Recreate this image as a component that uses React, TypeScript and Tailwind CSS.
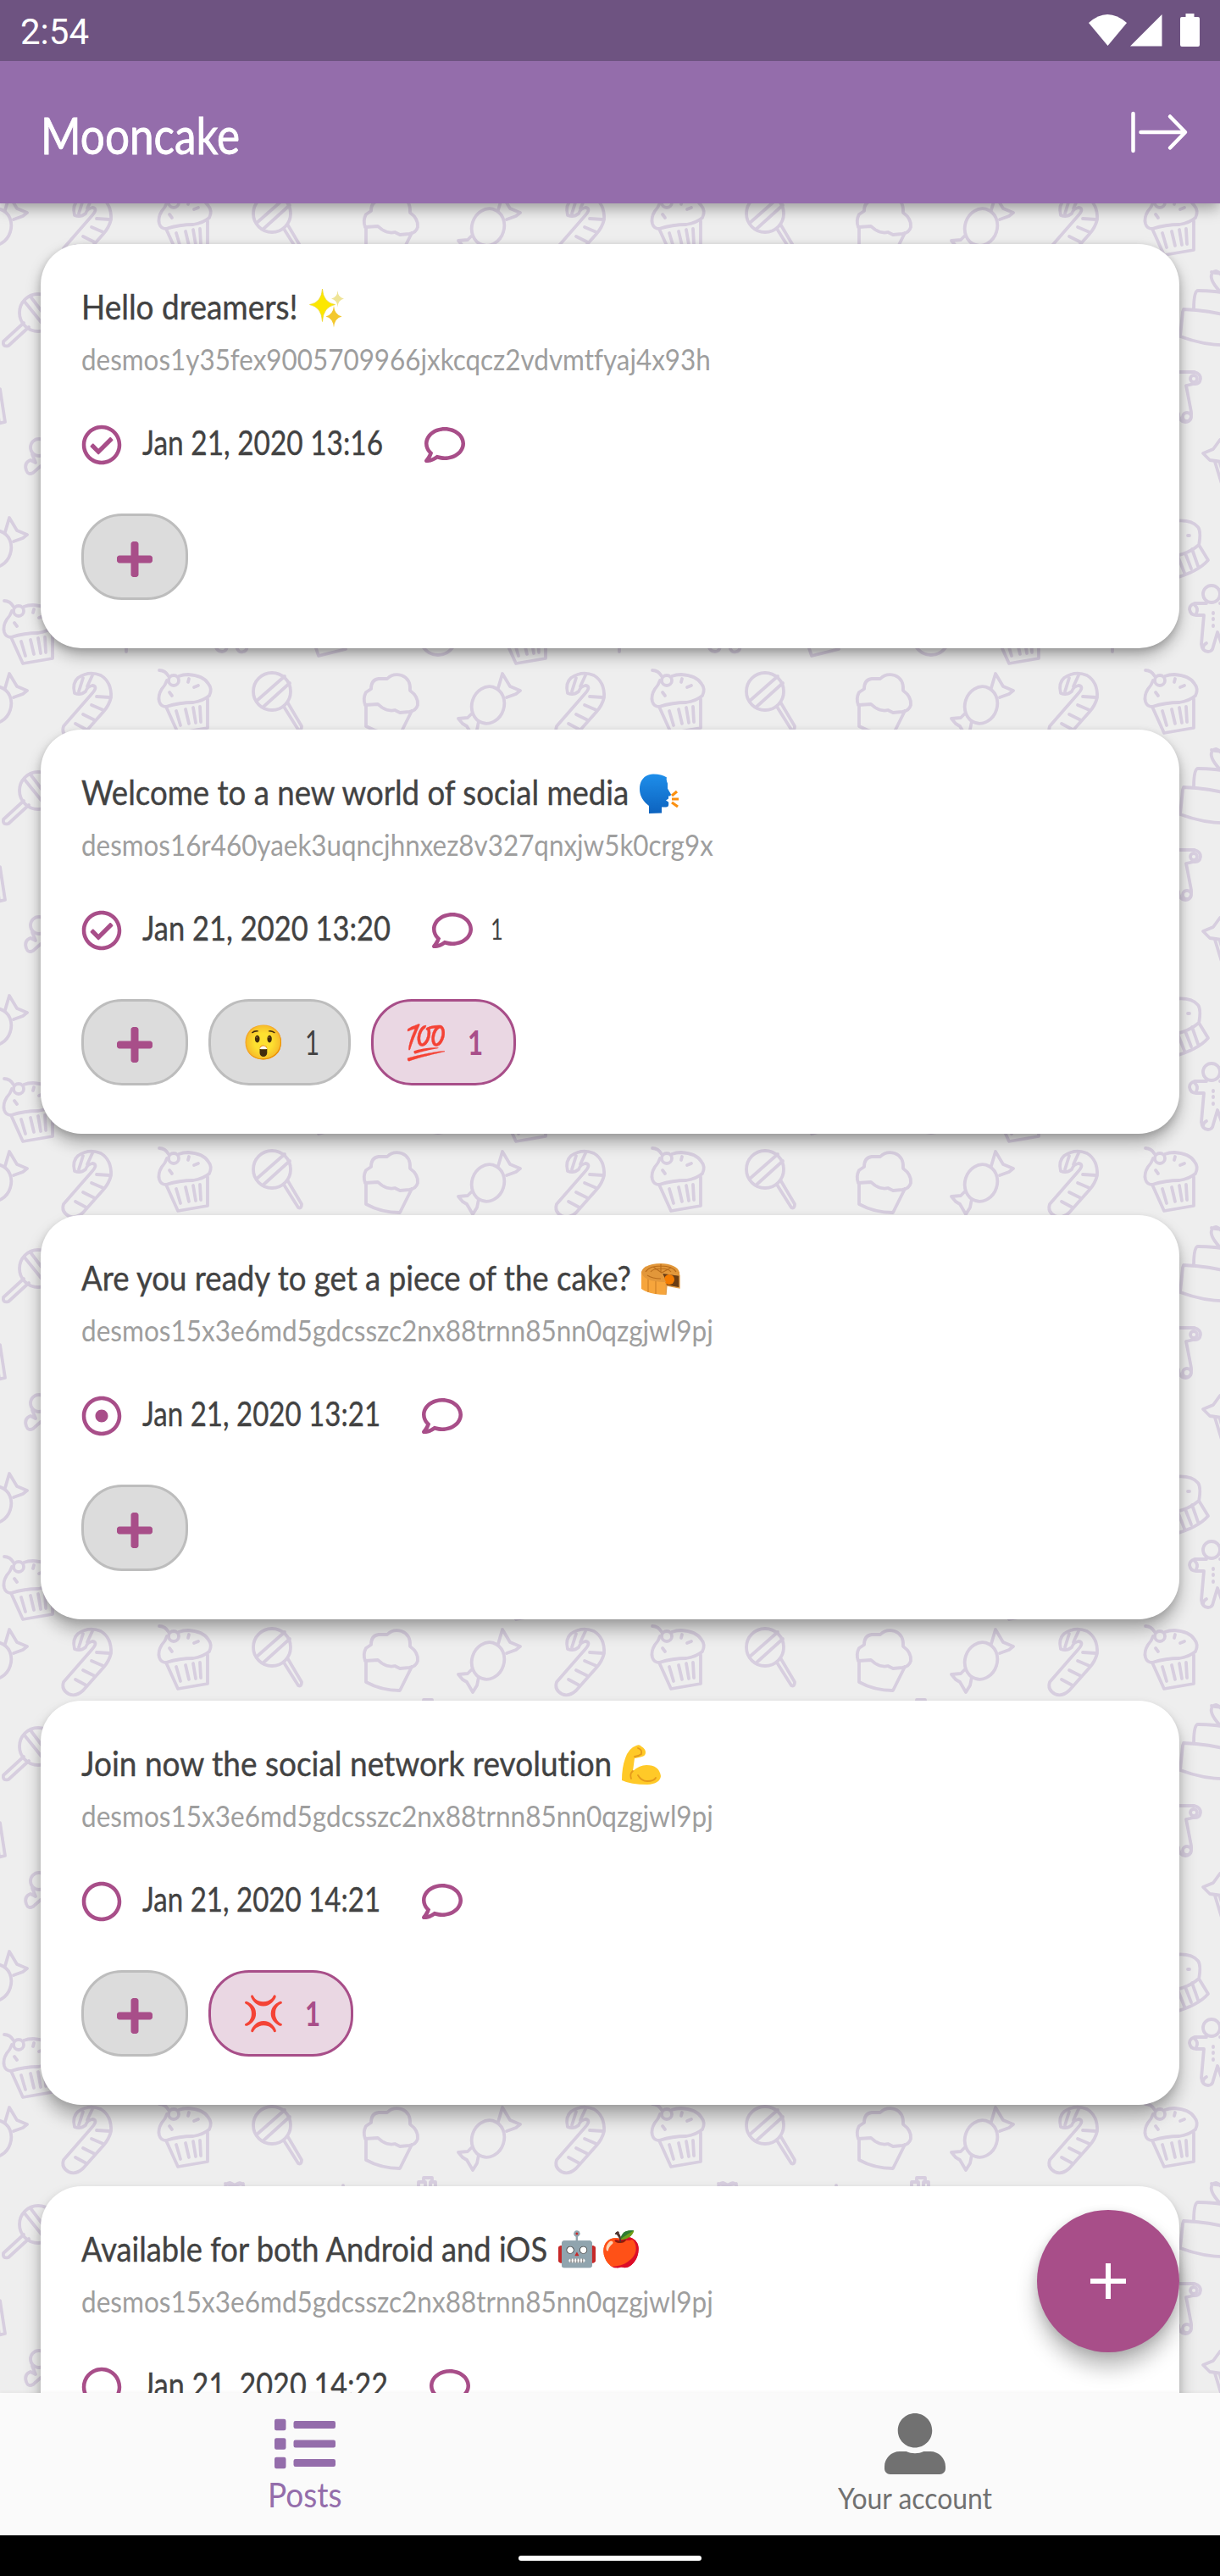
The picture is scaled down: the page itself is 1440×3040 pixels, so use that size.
import { useLayoutEffect, useRef, useState } from "react";
import { FaList, FaPlus, FaRegCheckCircle, FaRegCircle, FaRegComment, FaRegDotCircle, FaUserAlt } from "react-icons/fa";

/* Text condensed or widened horizontally to a given advance width. */
function Fit({ w, className = "", children }: { w: number; className?: string; children: string }) {
  const ref = useRef<HTMLSpanElement>(null);
  const [k, setK] = useState(1);
  useLayoutEffect(() => {
    if (ref.current) setK(w / ref.current.offsetWidth);
  }, [w]);
  return (
    <span className="block shrink-0" style={{ width: w }}>
      <span ref={ref} className={"inline-block origin-left whitespace-nowrap " + className} style={{ transform: `scaleX(${k})` }}>
        {children}
      </span>
    </span>
  );
}

function Cupcake() {
  return (
    <g>
      <path d="M188 19q7 0 11 7" />
      <circle cx="205" cy="31" r="6" />
      <path d="M197 31q-2 6-6 10q-5 8-3 15q2 6 8 6q16-5 32-5q12-2 19-8q4-8-1-14q-6-10-24-11q-6 0-11 2" />
      <path d="M196 62l14 31l35-6v-34M208 67l5 17M219 65l4 17M228 63l3 18M236 62l1 18M223 29l-1 4M229 39l5-2M200 45l3 4" />
    </g>
  );
}
function Wrapped() {
  return (
    <g>
      <ellipse cx="576" cy="60" rx="19" ry="22" transform="rotate(18 576 60)" />
      <path d="M588 40l5-17l9 15l12 5l-5 4l-11 4M557 70l-5 5l-11 1l5 6l5 3l7 12l5-8l2-10" />
    </g>
  );
}
function Ginger() {
  return (
    <g>
      <circle cx="266" cy="493" r="10" />
      <path d="M260 504h-14q-6 2-6 7q1 7 8 7h9l-3 34q1 9 8 9q5 0 6-6l5-17l6 17q2 8 8 6q6-1 4-10l-6-33h9q7-1 7-7t-6-7h-19" />
      <path d="M268 515v1M268 522v1M268 530v1M260 551q-4 2-4 6M246 506q5 4 2 10" />
    </g>
  );
}
function Lolly() {
  return (
    <g>
      <circle cx="321" cy="44" r="22" />
      <path d="M303 55l33-29M311 62l31-28M335 62l17 27q4 2 4-4l-16-27" />
    </g>
  );
}

function Doodles() {
  return (
    <g id="sweets">
      <path d="M88 46q-3-12 4-18q13-9 27-3q13 8 12 26q-2 9-9 17l-24 27q-9 8-17 4q-9-5-6-14l34-39q7-8 0-9q-6 1-8 7q-6 5-13 2z" />
      <path d="M93 44l5-16M103 38l6-13M114 50l16 1M108 60l14 6M98 71l14 7M89 82l13 7" />
      <Cupcake />
      <Lolly />
      <path d="M431 60q-3-8 1-15l6-4q0-11 9-12h10q7-7 17-4q11 4 10 18q10 7 9 17q-2 7-10 8l-11 1l-6-3q-7 2-15-3l-5-4z" />
      <path d="M432 61v24q18 10 40 10l14-28" />
      <Wrapped />
      <g transform="translate(0 380)"><Wrapped /></g>
      <g transform="translate(-183 482)"><Cupcake /></g>
      <circle cx="45" cy="161" r="22" />
      <path d="M29 148l25 31M36 142l22 29M28 173l-24 22q-1 7 6 5l24-22" />
      <path d="M-18 248l18 3l6 39l-24 5M-6 255l5 36" />
      <circle cx="46" cy="320" r="10" />
      <path d="M38 328l4 10l-6-3q-8 3-5 12q2 6 8 3l9-8" />
      <path d="M276 136q-14-15-9-22q5-5 10 2q6-7 10-1q4 9-8 21M250 135q20 0 40 4v24M250 135q-5 0-5 22M233 157q30 1 58 9v33q-30 2-62-10l3-29z" />
      <path d="M266 113q8 3 21 0" />
      <path d="M228 231h18q7 2 7 8q-1 7-8 6l-9 2q2 10 6 31q1 12-7 12q-8-1-8-10" />
      <circle cx="245" cy="239" r="4" />
      <circle cx="237" cy="284" r="5" />
      <path d="M276 311l-8 11l-12 5l8 8l14 2M270 337l8 26M276 339l6 20" />
      <path d="M210 409q30-7 40 5q4 5 1 22M210 449q25 0 41-14l11 18q-12 14-42 22zM243 440l7 20M235 445l7 18M226 448l8 20M238 424h2" />
      <Ginger />
      <path d="M149 555v6M372 554l4 12l32-8" />
      <circle cx="517" cy="544" r="21" />
      <path d="M405 115v6" />
      <path d="M494 125v-14h6v-5h10v5h4v14M502 111v6M508 111v6" />
    </g>
  );
}

function Backdrop() {
  return (
    <svg className="absolute inset-0 h-full w-full" aria-hidden="true">
      <defs>
        <g fill="none" stroke="#d7cedf" strokeWidth="3.8" strokeLinecap="round" strokeLinejoin="round">
          <Doodles />
        </g>
        <pattern id="tile" x="0" y="208" width="582" height="564" patternUnits="userSpaceOnUse">
          <g fill="none" stroke="#d7cedf" strokeWidth="3.8" strokeLinecap="round" strokeLinejoin="round">
            <use href="#sweets" />
            <use href="#sweets" x="-582" />
            <use href="#sweets" y="-564" />
            <use href="#sweets" x="582" />
          </g>
        </pattern>
      </defs>
      <rect width="100%" height="100%" fill="url(#tile)" />
    </svg>
  );
}

type Post = {
  text: string; tw: number; emoji: string[]; addr: string; aw: number;
  state: "done" | "sent" | "new"; date: string; dw: number; comments?: string;
  reactions: { e: string; active: boolean }[]; shadow: string;
};
const desmos15 = "desmos15x3e6md5gdcsszc2nx88trnn85nn0qzgjwl9pj";
const posts: Post[] = [
  { text: "Hello dreamers!", tw: 256, emoji: ["✨"], addr: "desmos1y35fex9005709966jxkcqcz2vdvmtfyaj4x93h", aw: 743, state: "done", date: "Jan 21, 2020 13:16", dw: 284, reactions: [], shadow: "shadow-[0_3px_9px_rgba(0,0,0,0.16),0_9px_18px_rgba(0,0,0,0.28)]" },
  { text: "Welcome to a new world of social media", tw: 646, emoji: ["🗣️"], addr: "desmos16r460yaek3uqncjhnxez8v327qnxjw5k0crg9x", aw: 746, state: "done", date: "Jan 21, 2020 13:20", dw: 293, comments: "1", reactions: [{ e: "😲", active: false }, { e: "💯", active: true }], shadow: "shadow-[0_3px_9px_rgba(0,0,0,0.14),0_11px_18px_rgba(0,0,0,0.28)]" },
  { text: "Are you ready to get a piece of the cake?", tw: 649, emoji: ["🥮"], addr: desmos15, aw: 746, state: "sent", date: "Jan 21, 2020 13:21", dw: 281, reactions: [], shadow: "shadow-[0_3px_9px_rgba(0,0,0,0.12),0_13px_19px_rgba(0,0,0,0.28)]" },
  { text: "Join now the social network revolution", tw: 626, emoji: ["💪"], addr: desmos15, aw: 746, state: "new", date: "Jan 21, 2020 14:21", dw: 281, reactions: [{ e: "💢", active: true }], shadow: "shadow-[0_3px_9px_rgba(0,0,0,0.10),0_15px_20px_rgba(0,0,0,0.28)]" },
  { text: "Available for both Android and iOS", tw: 550, emoji: ["🤖", "🍎"], addr: desmos15, aw: 746, state: "new", date: "Jan 21, 2020 14:22", dw: 290, reactions: [], shadow: "shadow-[0_3px_9px_rgba(0,0,0,0.10),0_15px_20px_rgba(0,0,0,0.28)]" },
];

function Emoji({ children }: { children: string }) {
  if (children === "🥮")
    return (
      <svg className="size-[52px]" viewBox="0 0 52 52">
        <path d="M3 19v20q10 7 29 7V31l16 7V19z" fill="#f6a53c" />
        <path d="M11 27v16M20 29v16" stroke="#c97a22" strokeWidth="1" />
        <path d="M32 46V31l-5-11l21 3v15l-15-3z" fill="#6b3d13" stroke="#e6a04a" strokeWidth="1.300" />
        <circle cx="36" cy="28" r="6" fill="#f57c00" />
        <path d="M3 19C5 12 15 9 26 9s21 4 22 11v3l-21-3l5 11C15 31 4 27 3 19z" fill="#e2973a" />
        <path d="M8 19q4-7 18-7t18 7M14 19q3-4 12-4t12 4M10 23q6 4 16 4M26 10v10M17 13l10 7l11-6" fill="none" stroke="#b96d1c" strokeWidth="1.200" />
      </svg>
    );
  if (children === "💪")
    return (
      <svg className="size-[52px]" viewBox="0 0 52 52">
        <path d="M3 46q0-15 4-26Q11 8 20 5q4-2 6 1q5 3 5 7q0 4-4 5q-8 2-9 2l-2 15q8-7 16-7q15 0 17 13q-1 9-16 10Q13 51 3 46z" fill="#ffc928" />
        <path d="M18 18q4 0 8-3M22 8q5 2 4 6M16 35q-4 3-2 9M22 40q4 7 11 7q8 0 10-4" fill="none" stroke="#e59a1b" strokeWidth="1.800" strokeLinecap="round" />
      </svg>
    );
  if (children === "✨")
    return (
      <svg className="size-[52px]" viewBox="0 0 52 52">
        <path d="M19.500 5q1 16 15 18.500q-14 2.500-15 20q-1-17.500-15-20q14-2.500 15-18.500z" fill="#fce700" stroke="#e8cf10" strokeWidth=".6" />
        <path d="M37.500 7q.5 8 7.500 9.500q-7 1.500-7.500 10q-.5-8.500-7.500-10q7-1.500 7.500-9.500z" fill="#efe496" />
        <path d="M33 25q1 10.500 9.500 12.500q-8.500 2-9.500 13q-1-11-9.500-13q8.500-2 9.500-12.500z" fill="#f3c82e" />
      </svg>
    );
  if (children === "🗣️")
    return (
      <svg className="size-[52px]" viewBox="0 0 52 52">
        <defs><linearGradient id="head" x2="0" y2="1"><stop stopColor="#1e8eea" /><stop offset="1" stopColor="#0d63bf" /></linearGradient></defs>
        <path d="M15 51v-9C7 36 4 29 4 22C4 10 12 4.500 20 4.500q10 0 16 4q-1 3 1 7v6l4 7q0 2-3 2v3l-3 2l3 2q1 6-3 6h-5v7z" fill="url(#head)" />
        <path d="M42 30l6-5M42 34h8M42 38l7 5" stroke="#fb9010" strokeWidth="3.200" />
      </svg>
    );
  return <span className="flex h-[52px] w-[52px] items-center justify-center pt-[2px] font-['Noto_Color_Emoji'] text-[40px] leading-[52px]">{children}</span>;
}

function Card({ p }: { p: Post }) {
  const StateIcon = p.state === "done" ? FaRegCheckCircle : p.state === "sent" ? FaRegDotCircle : FaRegCircle;
  return (
    <article className={"flex h-[477px] shrink-0 flex-col rounded-[48px] bg-white px-12 pt-12 text-[40px] text-[#424242] " + p.shadow}>
      <div className="flex h-[52px] items-center [-webkit-text-stroke:0.4px]">
        <Fit w={p.tw}>{p.text}</Fit>
        <div className="ml-[9px] flex">{p.emoji.map((e) => <Emoji key={e}>{e}</Emoji>)}</div>
      </div>
      <div className="flex h-[74px] items-center pb-[3px] text-[35px] text-[#9e9e9e]">
        <Fit w={p.aw}>{p.addr}</Fit>
      </div>
      <div className="flex h-[126px] items-center">
        <StateIcon className="size-12 text-[#a84e89]" />
        <div className="ml-6 pb-[7px] [-webkit-text-stroke:0.4px]"><Fit w={p.dw}>{p.date}</Fit></div>
        <FaRegComment className="ml-[49px] size-12 text-[#a84e89]" />
        {p.comments && <span className="ml-[21px] pb-[5px] text-[34px]"><Fit w={15}>{p.comments}</Fit></span>}
      </div>
      <div className="mt-[18px] flex gap-6">
        <button className="flex h-[102px] w-[126px] items-center justify-center rounded-[48px] border-[3px] border-[#bdbdbd] bg-[#dcdcdc] pt-1.5">
          <FaPlus className="size-12 text-[#a84e89]" />
        </button>
        {p.reactions.map((r) => (
          <button key={r.e} className={"flex h-[102px] items-center rounded-[48px] border-[3px] pl-[36px] " + (r.active ? "w-[171px] border-[#a84e89] bg-[#ead7e3] font-bold text-[#a84e89]" : "w-[168px] border-[#bdbdbd] bg-[#dcdcdc]")}>
            <Emoji>{r.e}</Emoji>
            <span className="ml-[23px]"><Fit w={r.active ? 18 : 17}>1</Fit></span>
          </button>
        ))}
      </div>
    </article>
  );
}

export default function App() {
  return (
    <div className="relative flex h-[3040px] w-[1440px] flex-col overflow-hidden bg-[#eeeeee] font-['Lato',sans-serif] [font-variant-ligatures:none]">
      <Backdrop />
      <header className="relative z-10 shadow-[0_6px_16px_rgba(0,0,0,0.35)]">
        <div className="flex h-[72px] items-center justify-between bg-[#6e5381] pl-6 pr-6 text-white">
          <span className="pt-[3px] font-['Roboto',sans-serif] text-[42px] leading-[69px]">2:54</span>
          <svg width="132" height="40" viewBox="1284 16 132 40" fill="#fff">
            <path d="M1285 27q22-20 45 0l-22.500 27z" />
            <path d="M1371.500 17v37.500h-37.500z" />
            <path d="M1399.500 16h10v4h4.500q2 0 2 2v31q0 2-2 2h-19q-2 0-2-2v-31q0-2 2-2h4.500z" />
          </svg>
        </div>
        <div className="flex h-[168px] items-center justify-between bg-[#946dab] pl-12 pr-9 text-white">
          <div className="pt-1.5 text-[60px] leading-[72px] [-webkit-text-stroke:0.8px]"><Fit w={235}>Mooncake</Fit></div>
          <svg width="70" height="52" viewBox="1334 130 70 52" fill="none" stroke="#fff" strokeWidth="4.500" strokeLinecap="round" strokeLinejoin="round">
            <path d="M1337.500 134v44M1346.500 156h52M1381 137.500l18 18.500l-18 18.500" />
          </svg>
        </div>
      </header>
      <main className="relative flex min-h-0 flex-1 flex-col gap-24 overflow-hidden px-12 pt-12">
        {posts.map((p) => <Card key={p.text} p={p} />)}
      </main>
      <button className="absolute left-[1224px] top-[2608px] flex size-[168px] items-center justify-center rounded-full bg-[#a84e89] shadow-[0_18px_24px_rgba(0,0,0,0.26),0_3px_12px_rgba(0,0,0,0.12)]">
        <svg width="42" height="42" stroke="#fff" strokeWidth="6"><path d="M21 0v42M0 21h42" /></svg>
      </button>
      <nav className="relative grid h-[168px] grid-cols-2 bg-[#fafafa] shadow-[0_-2px_4px_rgba(0,0,0,0.03)]">
        <div className="flex flex-col items-center pt-6 text-[40px] leading-[48px] text-[#946dab]">
          <FaList className="size-[72px]" />
          <Fit w={88}>Posts</Fit>
        </div>
        <div className="flex flex-col items-center pt-6 text-[34px] leading-[48px] text-[#717171]">
          <FaUserAlt className="size-[72px]" />
          <div className="mt-[4px]"><Fit w={182}>Your account</Fit></div>
        </div>
      </nav>
      <footer className="relative flex h-12 items-center justify-center bg-black pt-[6px]">
        <div className="h-[6px] w-[216px] rounded-full bg-white" />
      </footer>
    </div>
  );
}
